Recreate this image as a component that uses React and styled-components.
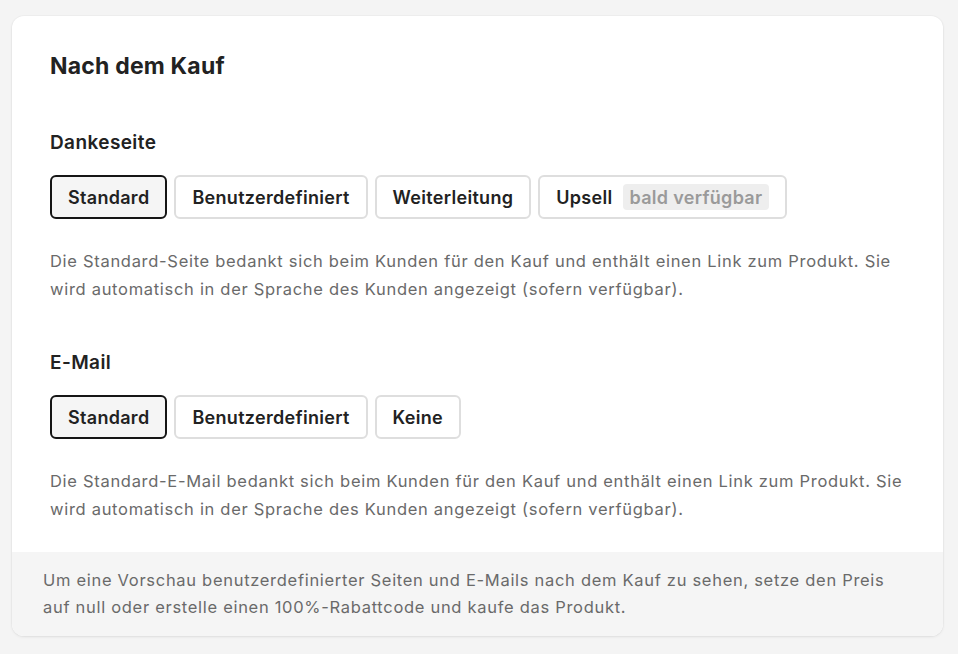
import React from "react";
import styled, { createGlobalStyle } from "styled-components";

const Global = createGlobalStyle`
  html, body { margin: 0; padding: 0; background: #f4f4f4; }
  body { font-family: Inter, "Noto Sans", sans-serif; color: #222; -webkit-font-smoothing: antialiased; }
`;

const Page = styled.div`
  padding: 16px 15px 18px 12px;
`;

const Card = styled.section`
  background: #fff;
  border-radius: 12px;
  box-shadow: 0 1px 3px rgba(0, 0, 0, 0.08), 0 0 0 1px rgba(0, 0, 0, 0.02);
  overflow: hidden;
`;

const Body = styled.div`
  padding: 38px 38px 29px 38px;
`;

const Title = styled.h2`
  margin: 0 0 53px;
  font-size: 23px;
  line-height: 24px;
  letter-spacing: 0.2px;
  font-weight: 700;
  color: #222;
`;

const Section = styled.div`
  & + & { margin-top: 48px; }
`;

const Heading = styled.h3`
  margin: 0 0 20px;
  font-size: 19px;
  line-height: 24px;
  letter-spacing: 0.4px;
  font-weight: 600;
  color: #222;
`;

const Options = styled.div`
  display: flex;
  gap: 7px;
  margin-bottom: 28px;
`;

const Option = styled.button`
  display: inline-flex;
  align-items: center;
  height: 44px;
  padding: 0 16px;
  border-radius: 6px;
  border: 2px solid ${(p) => (p.$active ? "#151515" : "#dedede")};
  background: ${(p) => (p.$active ? "#f5f5f5" : "#fff")};
  font-family: inherit;
  font-size: 18px;
  letter-spacing: 0.3px;
  font-weight: 600;
  color: #222;
  cursor: pointer;
`;

const Badge = styled.span`
  margin-left: 10px;
  padding: 0 7px;
  height: 26px;
  display: inline-flex;
  align-items: center;
  background: #eeeeee;
  border-radius: 4px;
  color: #9a9a9a;
  font-weight: 600;
`;

const Text = styled.p`
  margin: 0;
  font-size: 16.5px;
  letter-spacing: 0.7px;
  line-height: 28px;
  color: #6a6a6a;
`;

const Footer = styled.div`
  background: #f5f5f5;
  padding: 15px 48px 15px 31px;
  font-size: 16.5px;
  letter-spacing: 0.7px;
  line-height: 27px;
  color: #6a6a6a;
`;

export default function App() {
  return (
    <>
      <Global />
      <Page>
        <Card>
          <Body>
            <Title>Nach dem Kauf</Title>
            <Section>
              <Heading>Dankeseite</Heading>
              <Options>
                <Option $active>Standard</Option>
                <Option>Benutzerdefiniert</Option>
                <Option>Weiterleitung</Option>
                <Option>
                  Upsell<Badge>bald verfügbar</Badge>
                </Option>
              </Options>
              <Text>
                Die Standard-Seite bedankt sich beim Kunden für den Kauf und enthält einen Link zum Produkt. Sie
                wird automatisch in der Sprache des Kunden angezeigt (sofern verfügbar).
              </Text>
            </Section>
            <Section>
              <Heading>E-Mail</Heading>
              <Options>
                <Option $active>Standard</Option>
                <Option>Benutzerdefiniert</Option>
                <Option>Keine</Option>
              </Options>
              <Text>
                Die Standard-E-Mail bedankt sich beim Kunden für den Kauf und enthält einen Link zum Produkt. Sie
                wird automatisch in der Sprache des Kunden angezeigt (sofern verfügbar).
              </Text>
            </Section>
          </Body>
          <Footer>
            Um eine Vorschau benutzerdefinierter Seiten und E-Mails nach dem Kauf zu sehen, setze den Preis
            auf null oder erstelle einen 100%-Rabattcode und kaufe das Produkt.
          </Footer>
        </Card>
      </Page>
    </>
  );
}
